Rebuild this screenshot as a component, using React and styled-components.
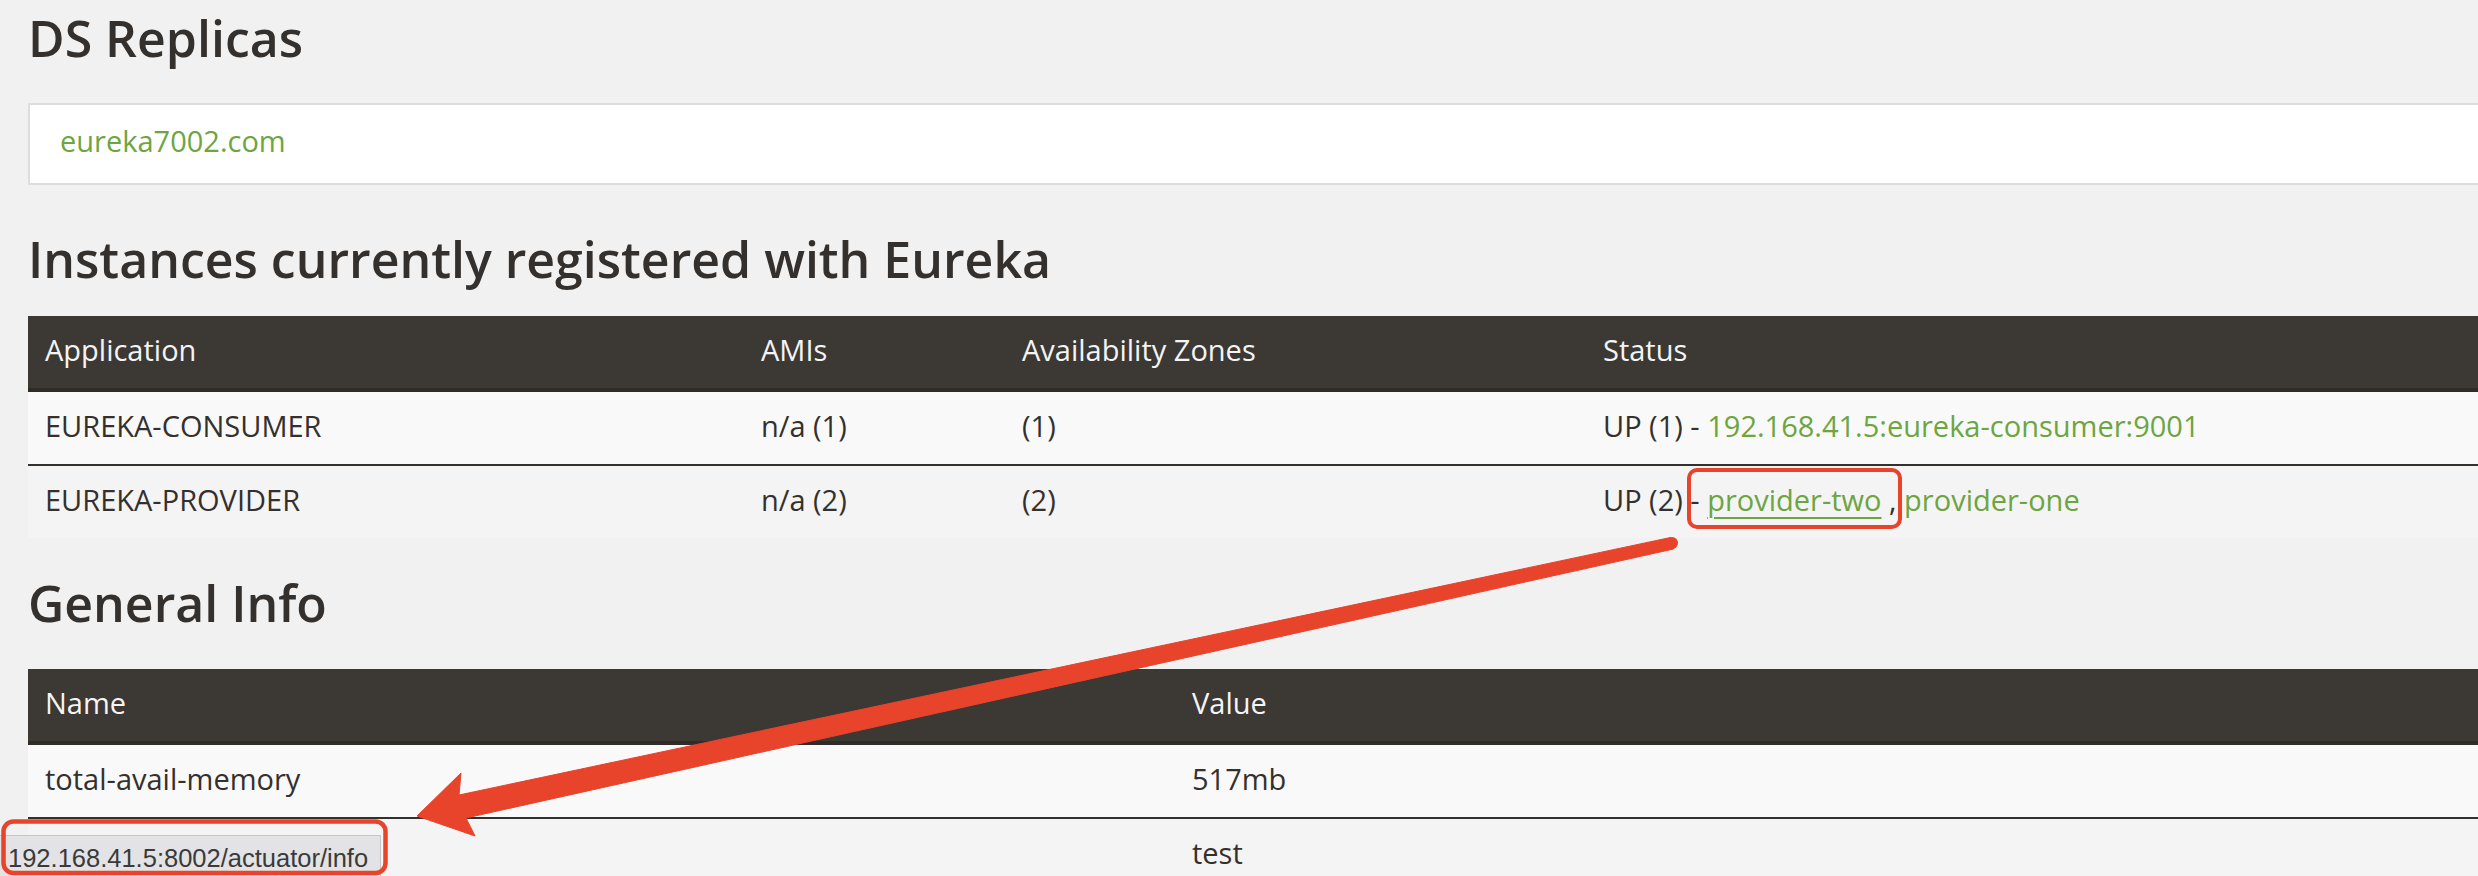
import React from 'react';
import styled, {createGlobalStyle} from 'styled-components';

const GlobalStyle = createGlobalStyle`
  html, body {
    margin: 0;
    padding: 0;
    overflow: hidden;
    background: #f1f1f1;
  }
  #root {
    position: relative;
    width: 2478px;
    height: 876px;
    overflow: hidden;
  }
`;

const Page = styled.main`
  width: 2600px;
  padding: 10px 0 0 28px;
  font-family: "Open Sans", "Noto Sans", sans-serif;
  color: #34302d;
`;

const Heading = styled.h2`
  margin: ${p => p.$top || 0}px 0 ${p => p.$bottom || 0}px 0;
  font-size: 50px;
  line-height: 57px;
  font-weight: 600;
  color: #34302d;
`;

const Well = styled.div`
  background: #fff;
  border: 2px solid #ddd;
  border-right: none;
  padding: 16px 30px 22px 30px;
  font-size: 29px;
  line-height: 40px;
`;

const Link = styled.a`
  color: #6da53f;
  text-decoration: ${p => (p.$hover ? 'underline' : 'none')};
  text-decoration-thickness: 2px;
  text-underline-offset: 6px;
`;

const Table = styled.table`
  width: 2572px;
  table-layout: fixed;
  border-collapse: collapse;
  font-size: 29px;
  line-height: 40px;
`;

const Th = styled.th`
  box-sizing: border-box;
  width: ${p => (p.$w ? p.$w + 'px' : 'auto')};
  background: #3c3834;
  color: #f4f4f4;
  font-weight: 500;
  text-align: left;
  padding: 14px 17px 18px 17px;
  border-bottom: 4px solid #2f2b28;
`;

const Row = styled.tr`
  background: ${p => (p.$odd ? '#f9f9f9' : '#f4f4f4')};
  border-bottom: ${p => (p.$odd ? '2px solid #34302d' : 'none')};
`;

const Td = styled.td`
  box-sizing: border-box;
  height: ${p => (p.$odd ? 72 : 71)}px;
  padding: 14px 17px 18px 17px;
  white-space: nowrap;
  color: #34302d;
`;

const StatusBar = styled.div`
  position: absolute;
  left: 0;
  top: 835px;
  width: 381px;
  height: 41px;
  padding: 7px 0 0 8px;
  box-sizing: border-box;
  background: #e3e3e5;
  border-top: 1px solid #c6c6c8;
  border-right: 1px solid #c6c6c8;
  font-family: "Liberation Sans", Arial, sans-serif;
  font-size: 25.5px;
  line-height: 30px;
  color: #3a3a3a;
  white-space: nowrap;
`;

const Overlay = styled.svg`
  position: absolute;
  left: 0;
  top: 0;
  pointer-events: none;
`;

const RED = '#e8432b';

function Annotations() {
  return (
    <Overlay width="2478" height="876" viewBox="0 0 2478 876">
      <rect x="1689" y="470" width="211" height="57" rx="8" fill="none" stroke={RED} strokeWidth="4" />
      <rect x="3.5" y="821.5" width="382" height="51.5" rx="10" fill="none" stroke={RED} strokeWidth="4.5" />
      <polygon
        fill={RED}
        strokeLinejoin="round"
        stroke={RED}
        strokeWidth="1"
        points="1670.5,537.5 459,795 461,773 417,816 475,836 466,818 1673.5,549"
      />
      <circle cx="1672" cy="543" r="6" fill={RED} />
    </Overlay>
  );
}

export default function App() {
  return (
    <>
      <GlobalStyle />
      <Page>
        <Heading $bottom={36}>DS Replicas</Heading>
        <Well>
          <Link href="#">eureka7002.com</Link>
        </Well>

        <Heading $top={46} $bottom={28}>Instances currently registered with Eureka</Heading>
        <Table>
          <thead>
            <tr>
              <Th $w={716}>Application</Th>
              <Th $w={261}>AMIs</Th>
              <Th $w={581}>Availability Zones</Th>
              <Th>Status</Th>
            </tr>
          </thead>
          <tbody>
            <Row $odd>
              <Td $odd>EUREKA-CONSUMER</Td>
              <Td $odd>n/a (1)</Td>
              <Td $odd>(1)</Td>
              <Td $odd>
                UP (1) - <Link href="#">192.168.41.5:eureka-consumer:9001</Link>
              </Td>
            </Row>
            <Row>
              <Td>EUREKA-PROVIDER</Td>
              <Td>n/a (2)</Td>
              <Td>(2)</Td>
              <Td>
                UP (2) - <Link href="#" $hover>provider-two</Link> , <Link href="#">provider-one</Link>
              </Td>
            </Row>
          </tbody>
        </Table>

        <Heading $top={37} $bottom={37}>General Info</Heading>
        <Table>
          <thead>
            <tr>
              <Th $w={1147}>Name</Th>
              <Th>Value</Th>
            </tr>
          </thead>
          <tbody>
            <Row $odd>
              <Td $odd>total-avail-memory</Td>
              <Td $odd>517mb</Td>
            </Row>
            <Row>
              <Td></Td>
              <Td>test</Td>
            </Row>
          </tbody>
        </Table>
      </Page>
      <StatusBar>192.168.41.5:8002/actuator/info</StatusBar>
      <Annotations />
    </>
  );
}
